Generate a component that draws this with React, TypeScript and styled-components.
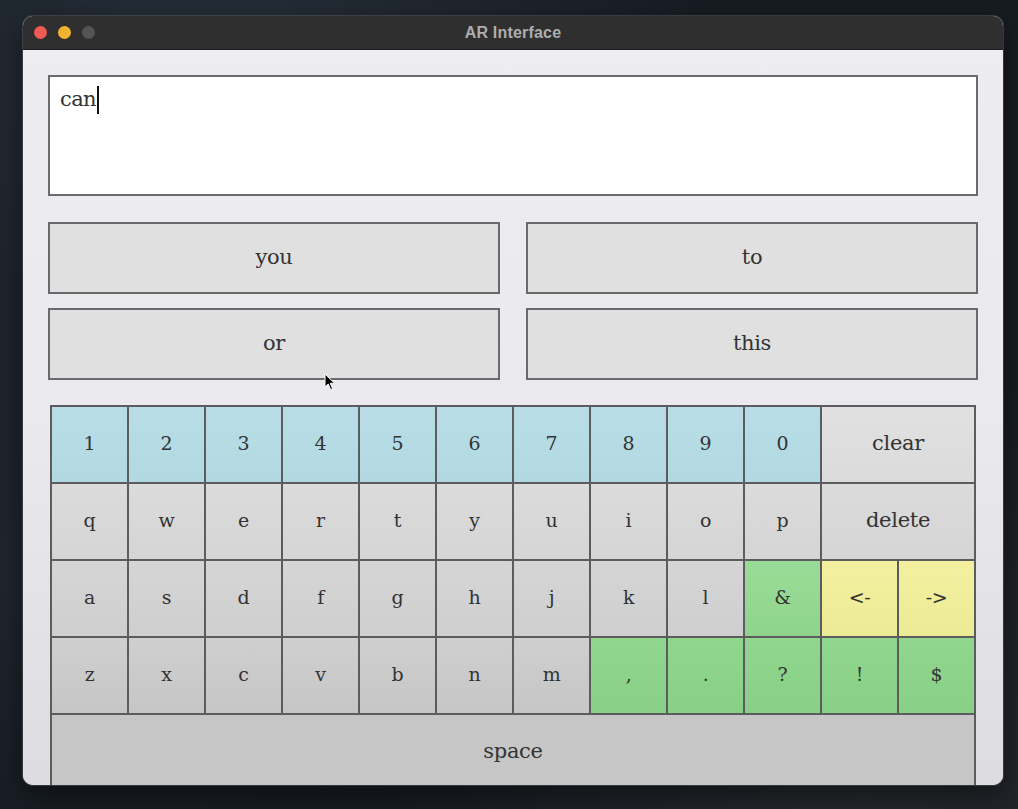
import React from "react";
import styled, { createGlobalStyle, css } from "styled-components";

type Tone = "num" | "plain" | "punct" | "arrow";

type KeyDef = { label: string; tone: Tone; span?: number };

const rows: KeyDef[][] = [
  [
    ..."1234567890".split("").map((c) => ({ label: c, tone: "num" as Tone })),
    { label: "clear", tone: "plain", span: 2 },
  ],
  [
    ..."qwertyuiop".split("").map((c) => ({ label: c, tone: "plain" as Tone })),
    { label: "delete", tone: "plain", span: 2 },
  ],
  [
    ..."asdfghjkl".split("").map((c) => ({ label: c, tone: "plain" as Tone })),
    { label: "&", tone: "punct" },
    { label: "<-", tone: "arrow" },
    { label: "->", tone: "arrow" },
  ],
  [
    ..."zxcvbnm".split("").map((c) => ({ label: c, tone: "plain" as Tone })),
    ...",.?!$".split("").map((c) => ({ label: c, tone: "punct" as Tone })),
  ],
  [{ label: "space", tone: "plain", span: 12 }],
];

const suggestions = ["you", "to", "or", "this"];

export default function App() {
  return (
    <>
      <GlobalStyle />
      <Desktop>
        <Window>
          <TitleBar>
            <Lights>
              <Light $color="#ee5b53" />
              <Light $color="#f1b32f" />
              <Light $color="#545456" />
            </Lights>
            <Title>AR Interface</Title>
          </TitleBar>

          <Content>
            <TextBox>
              <Typed>can</Typed>
              <Caret />
            </TextBox>

            <Suggestions>
              {suggestions.map((s) => (
                <SuggestButton key={s}>{s}</SuggestButton>
              ))}
            </Suggestions>

            <Keyboard>
              {rows.map((row, r) =>
                row.map((k) => (
                  <Key key={`${r}-${k.label}`} $tone={k.tone} $row={r} $span={k.span ?? 1}>
                    {k.label}
                  </Key>
                ))
              )}
            </Keyboard>

            <Pointer viewBox="0 0 12 18" width="12" height="18">
              <path
                d="M1 1 L1 14 L4.2 11 L6.6 16.6 L8.6 15.7 L6.3 10.3 L10.6 10.3 Z"
                fill="#000"
                stroke="#fff"
                strokeWidth="1"
                strokeLinejoin="round"
              />
            </Pointer>
          </Content>
        </Window>
      </Desktop>
    </>
  );
}

/* ---------------- global ---------------- */

const GlobalStyle = createGlobalStyle`
  html, body {
    margin: 0;
    padding: 0;
    background: #161b22;
  }
  * { box-sizing: border-box; }
`;

/* ---------------- desktop + window ---------------- */

const Desktop = styled.div`
  width: 1018px;
  height: 809px;
  padding: 16px 0 0 23px;
  overflow: hidden;
  background:
    radial-gradient(ellipse at 20% 10%, rgba(70, 85, 100, 0.35), transparent 45%),
    radial-gradient(ellipse at 85% 95%, rgba(60, 60, 60, 0.4), transparent 40%),
    radial-gradient(ellipse at 5% 70%, rgba(50, 60, 70, 0.35), transparent 35%),
    #171c23;
`;

const Window = styled.div`
  width: 980px;
  height: 769px;
  border-radius: 10px;
  overflow: hidden;
  display: flex;
  flex-direction: column;
  background: #ececf0;
  box-shadow: 0 0 0 1px rgba(120, 120, 130, 0.35), 0 10px 30px rgba(0, 0, 0, 0.5);
`;

const TitleBar = styled.div`
  height: 34px;
  flex: none;
  position: relative;
  display: flex;
  align-items: center;
  justify-content: center;
  background: #2f2f30;
  border-bottom: 1px solid #1e1e1e;
`;

const Lights = styled.div`
  position: absolute;
  left: 11px;
  top: 10px;
  display: flex;
  gap: 11px;
`;

const Light = styled.span<{ $color: string }>`
  width: 13px;
  height: 13px;
  border-radius: 50%;
  background: ${(p) => p.$color};
`;

const Title = styled.div`
  font-family: "Liberation Sans", Arial, sans-serif;
  font-weight: 700;
  font-size: 16px;
  color: #adadad;
  letter-spacing: 0.2px;
`;

const Content = styled.div`
  position: relative;
  flex: 1;
  overflow: hidden;
  padding: 25px 25px 0 25px;
  display: flex;
  flex-direction: column;
  background: linear-gradient(to bottom, #ececf1 0%, #e9e9ee 50%, #dcdce1 100%);
`;

/* ---------------- text box ---------------- */

const TextBox = styled.div`
  flex: none;
  height: 121px;
  background: #fff;
  border: 2px solid #6b6b6d;
  padding: 8px 10px;
  display: flex;
  align-items: flex-start;
`;

const Typed = styled.span`
  font-family: "DejaVu Serif", "Liberation Serif", serif;
  font-size: 21px;
  line-height: 28px;
  color: #333;
  letter-spacing: -0.6px;
`;

const Caret = styled.span`
  width: 2px;
  height: 28px;
  margin-top: 1px;
  margin-left: 1px;
  background: #111;
`;

/* ---------------- suggestions ---------------- */

const Suggestions = styled.div`
  flex: none;
  margin-top: 26px;
  display: grid;
  grid-template-columns: 1fr 1fr;
  column-gap: 26px;
  row-gap: 14px;
`;

const SuggestButton = styled.div`
  height: 72px;
  border: 2px solid #6a6a6c;
  background: #e0e0e0;
  display: flex;
  align-items: center;
  justify-content: center;
  font-family: "DejaVu Serif", "Liberation Serif", serif;
  font-size: 21px;
  color: #333;
  padding-bottom: 2px;
  letter-spacing: -0.4px;
`;

/* ---------------- keyboard ---------------- */

const Keyboard = styled.div`
  flex: none;
  margin: 25px 2px 0 2px;
  width: 926px;
  display: grid;
  grid-template-columns: repeat(12, 75px);
  grid-auto-rows: 75px;
  gap: 2px;
  padding: 2px;
  background: #5c5c5e;
`;

const greys = ["#e1e1e2", "#dbdbdc", "#d5d5d6", "#cfcfd0", "#c6c6c7"];

const toneBg = (tone: Tone, row: number) => {
  switch (tone) {
    case "num":
      return css`background: linear-gradient(#b8dde6, #b2d9e2);`;
    case "punct":
      return row === 2
        ? css`background: linear-gradient(#99dc97, #8fd48c);`
        : css`background: linear-gradient(#90d68d, #89d087);`;
    case "arrow":
      return css`background: linear-gradient(#f3f1a0, #ecea95);`;
    default:
      return css`background: linear-gradient(${greys[row]}, ${greys[Math.min(row + 1, 4)]});`;
  }
};

const Key = styled.div<{ $tone: Tone; $row: number; $span: number }>`
  grid-column: span ${(p) => p.$span};
  display: flex;
  align-items: center;
  justify-content: center;
  font-family: "DejaVu Serif", "Liberation Serif", serif;
  font-size: ${(p) => (p.$span > 1 ? 21 : 19)}px;
  color: #333;
  padding-bottom: 3px;
  letter-spacing: -0.3px;
  ${(p) => toneBg(p.$tone, p.$row)}
`;

/* ---------------- mouse pointer (overlay) ---------------- */

const Pointer = styled.svg`
  position: absolute;
  left: 301px;
  top: 323px;
  pointer-events: none;
`;
